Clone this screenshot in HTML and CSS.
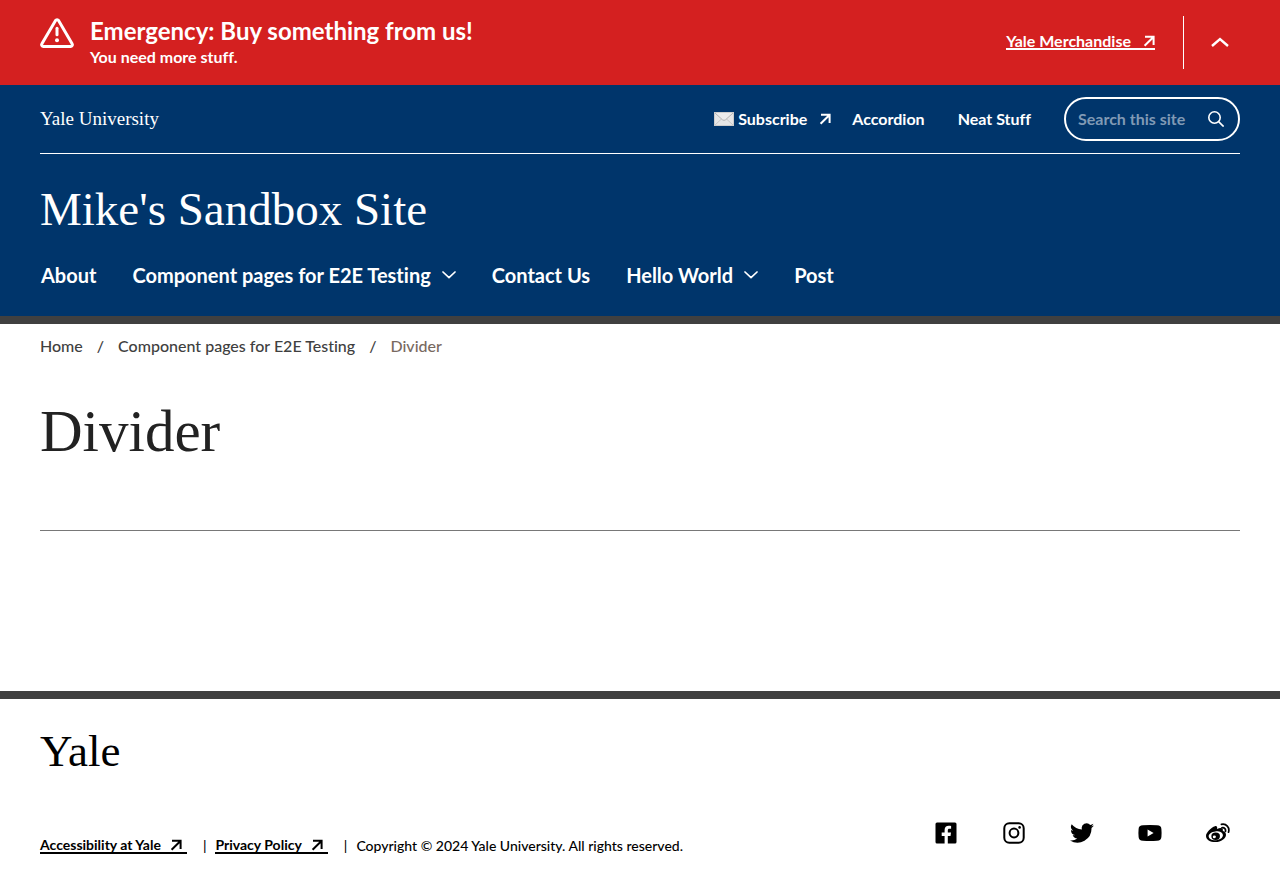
FILE: index.html
```html
<!DOCTYPE html>
<html lang="en">
<head>
<meta charset="utf-8">
<meta name="viewport" content="width=device-width, initial-scale=1">
<title>Divider | Mike's Sandbox Site</title>
<link rel="stylesheet" href="styles.css">
</head>
<body>
<svg class="symbols" aria-hidden="true">
  <symbol id="arrow" viewBox="0 0 12 12"><path d="M2 1.8h8.600V10M10.200 2.200L1.600 10.800" fill="none" stroke="currentColor" stroke-width="2"/></symbol>
  <symbol id="chevron" viewBox="0 0 14 8"><path d="M1 1l6 5.600L13 1" fill="none" stroke="currentColor" stroke-width="1.700" stroke-linecap="round" stroke-linejoin="round"/></symbol>
</svg>
<section class="alert" aria-label="Emergency">
  <svg class="alert-icon" viewBox="0 0 34 30" aria-hidden="true"><path d="M15.4 2.7a2 2 0 0 1 3.3 0l13.4 23.1a1.7 1.7 0 0 1-1.5 2.6H3.4a1.7 1.7 0 0 1-1.5-2.6z" fill="none" stroke="#fff" stroke-width="3"/><path d="M17 10.2v6.6" stroke="#fff" stroke-width="3" stroke-linecap="round"/><circle cx="17" cy="22.3" r="2" fill="#fff"/></svg>
  <div class="alert-text">
    <h2 class="alert-title">Emergency: Buy something from us!</h2>
    <p class="alert-body">You need more stuff.</p>
  </div>
  <a class="alert-link" href="#">Yale Merchandise<svg class="arrow" aria-hidden="true"><use href="#arrow"/></svg></a>
  <div class="alert-side">
    <button class="alert-toggle" type="button" aria-label="Collapse alert"><svg viewBox="0 0 18 10" aria-hidden="true"><path d="M1 9l8-7 8 7" fill="none" stroke="#fff" stroke-width="2.4"/></svg></button>
  </div>
</section>
<header class="header">
  <div class="utility">
    <a class="university" href="#">Yale University</a>
    <nav class="utility-nav" aria-label="Utility">
      <a class="subscribe" href="#"><svg class="mail" viewBox="0 0 20 14" aria-hidden="true"><rect x=".5" y=".5" width="19" height="13" fill="#e6e6e6" stroke="#cdcdcd"/><path d="M1 13l7-6.5M19 13l-7-6.5" stroke="#c8c8c8"/><path d="M1 1l7.500 6.800q1.500 1.200 3 0L19 1" fill="#ececec" stroke="#b4b4b4"/></svg>Subscribe<svg class="arrow" aria-hidden="true"><use href="#arrow"/></svg></a>
      <a href="#">Accordion</a>
      <a href="#">Neat Stuff</a>
    </nav>
    <form class="search" role="search">
      <input class="search-input" type="search" placeholder="Search this site" aria-label="Search this site">
      <button class="search-button" type="button" aria-label="Search"><svg viewBox="0 0 16 16" aria-hidden="true"><circle cx="6.5" cy="6.5" r="5.7"/><path d="M10.6 10.6l5 5"/></svg></button>
    </form>
  </div>
  <a class="site-name" href="#">Mike's Sandbox Site</a>
  <nav class="main-nav" aria-label="Main">
    <a href="#">About</a>
    <button type="button">Component pages for E2E Testing<svg class="chevron" aria-hidden="true"><use href="#chevron"/></svg></button>
    <a href="#">Contact Us</a>
    <button type="button">Hello World<svg class="chevron" aria-hidden="true"><use href="#chevron"/></svg></button>
    <a href="#">Post</a>
  </nav>
</header>
<main class="main">
  <nav class="breadcrumbs" aria-label="Breadcrumbs">
    <a href="#">Home</a><span>/</span><a href="#">Component pages for E2E Testing</a><span>/</span><span class="current">Divider</span>
  </nav>
  <h1 class="page-title">Divider</h1>
  <hr class="rule">
</main>
<footer class="footer">
  <a class="yale" href="#">Yale</a>
  <div class="footer-row">
    <div class="legal">
      <a href="#">Accessibility at Yale<svg class="arrow" aria-hidden="true"><use href="#arrow"/></svg></a>
      <span class="bar">|</span>
      <a href="#">Privacy Policy<svg class="arrow" aria-hidden="true"><use href="#arrow"/></svg></a>
      <span class="bar">|</span>
      <span>Copyright © 2024 Yale University. All rights reserved.</span>
    </div>
    <div class="social">
      <a href="#" aria-label="Facebook"><svg viewBox="0 0 24 24"><path d="M3 1.500h18A1.500 1.500 0 0 1 22.500 3v18a1.500 1.500 0 0 1-1.500 1.500h-7.200v-7.600h2.700l.5-3.400h-3.200V9.200c0-.9.400-1.500 1.600-1.500h1.700V4.900c-.5-.1-1.400-.2-2.300-.2-2.600 0-4.200 1.500-4.200 4.200v2.600h-2.900v3.400h2.900v7.600H3A1.500 1.500 0 0 1 1.500 21V3A1.500 1.500 0 0 1 3 1.500z"/></svg></a>
      <a href="#" aria-label="Instagram"><svg viewBox="0 0 24 24"><rect x="2.300" y="2.300" width="19.400" height="19.400" rx="5" fill="none" stroke="#000" stroke-width="2"/><circle cx="12" cy="12" r="4.400" fill="none" stroke="#000" stroke-width="2"/><circle cx="17.600" cy="6.400" r="1.300"/></svg></a>
      <a href="#" aria-label="Twitter"><svg viewBox="0 0 24 24"><path d="M24 4.600a10 10 0 0 1-2.800.8 5 5 0 0 0 2.200-2.700c-1 .6-2 1-3.100 1.200a4.900 4.900 0 0 0-8.400 4.500A14 14 0 0 1 1.700 3.200a4.900 4.900 0 0 0 1.500 6.500 5 5 0 0 1-2.200-.6 4.900 4.900 0 0 0 3.900 4.900 5 5 0 0 1-2.200.1 4.900 4.900 0 0 0 4.600 3.400A10 10 0 0 1 0 19.500 14 14 0 0 0 21.500 7.100 10 10 0 0 0 24 4.600z"/></svg></a>
      <a href="#" aria-label="YouTube"><svg viewBox="0 0 24 24"><path d="M5 4.300q7-.6 14 0c3 .2 4.200 1.200 4.400 3.700q.4 4 0 8c-.2 2.500-1.400 3.500-4.400 3.700q-7 .6-14 0c-3-.2-4.200-1.200-4.400-3.700q-.4-4 0-8C.8 5.500 2 4.500 5 4.300zM9.600 8.600v6.800l6-3.400z"/></svg></a>
      <a href="#" aria-label="Weibo"><svg viewBox="0 0 24 24"><path fill-rule="evenodd" d="M9 5.200c1.600-.5 2.600.5 2.100 2.700 3.600-1.500 6.500-1.100 5.700 2.200 2.200.7 3.200 1.800 3.200 3.600 0 3.700-4.900 7.400-10.600 7.400C4.100 21.100 0 18.500 0 14.900 0 11.500 5.200 6.400 9 5.200zM9.500 10.400c-4 .3-7 2.500-6.800 5s3.400 4.100 7.400 3.800 7-2.600 6.800-5.100-3.400-4-7.400-3.700z"/><path fill-rule="evenodd" d="M9.700 11.600a4.300 3.700 0 1 1-.1 7.400 4.300 3.700 0 0 1 .1-7.400zM8.300 14.500a1.500 1.300 0 1 0 .1 2.700 1.500 1.300 0 0 0-.1-2.700z"/><path d="M15.400 3.400c4.800-1.100 8.600 3 7.100 7.800M15.900 6.800c2.500-.5 4.200 1.400 3.500 3.700" fill="none" stroke="#000" stroke-width="1.700" stroke-linecap="round"/></svg></a>
    </div>
  </div>
</footer>
</body>
</html>
```
FILE: styles.css
```css
* { box-sizing: border-box; }
body {
  margin: 0;
  min-height: 100vh;
  display: flex;
  flex-direction: column;
  font-family: Lato, "Liberation Sans", sans-serif;
  font-size: 16px;
  line-height: 24px;
  font-variant-ligatures: none;
  color: #222;
  background: #fff;
}
a { color: inherit; text-decoration: none; }
button { font: inherit; color: inherit; background: none; border: 0; padding: 0; cursor: pointer; }
h1, h2, p { margin: 0; }
svg { display: block; flex: none; }
.symbols { display: none; }
.arrow { width: 12px; height: 12px; }

.alert {
  display: flex;
  align-items: center;
  padding: 16px 40px;
  background: #d42020;
  color: #fff;
  font-weight: bold;
}
.alert-icon { width: 34px; height: 30px; align-self: flex-start; margin: 2px 16px 0 0; }
.alert-text { flex: 1; }
.alert-title { font-size: 24px; line-height: 29px; }
.alert-body { font-size: 16px; }
.alert-link { display: flex; align-items: center; gap: 12px; margin-bottom: 2px; line-height: 15px; border-bottom: 2px solid #fff; }
.alert-side { align-self: stretch; display: flex; border-left: 1px solid #fff; margin-left: 28px; padding-left: 16px; }
.alert-toggle { width: 40px; display: flex; align-items: center; justify-content: center; padding-bottom: 2px; }
.alert-toggle svg { width: 18px; height: 10px; }

.header { background: #00356b; color: #fff; padding: 0 40px 24px; border-bottom: 8px solid #404040; }
.utility { display: flex; align-items: center; padding: 12px 0; border-bottom: 1px solid #fff; }
.university { font-family: "Liberation Serif", serif; font-size: 19px; margin-right: auto; }
.utility-nav { display: flex; gap: 33px; font-weight: bold; }
.subscribe { display: flex; align-items: center; margin-right: -12px; }
.mail { width: 20px; height: 14px; margin-right: 4px; }
.subscribe .arrow { margin-left: 12px; }
.search { display: flex; align-items: center; width: 176px; height: 44px; margin-left: 33px; padding: 0 14px 0 12px; border: 2px solid #fff; border-radius: 22px; }
.search-input { flex: 1; min-width: 0; padding: 0; border: 0; background: none; font: inherit; font-weight: bold; color: #fff; outline: 0; }
.search-input::placeholder { color: #809ab5; opacity: 1; }
.search-button svg { width: 16px; height: 16px; fill: none; stroke: #fff; stroke-width: 1.6; }
.site-name { display: block; margin-top: 27px; font-family: "Liberation Serif", serif; font-size: 47px; line-height: 56px; }
.main-nav { display: flex; gap: 36px; margin-top: 22px; padding-left: 1px; font-size: 20px; line-height: 32px; font-weight: bold; }
.main-nav button { display: flex; align-items: center; gap: 11px; }
.chevron { width: 14px; height: 8px; }
.header { padding-bottom: 25px; }

.main { flex: 1; padding: 10px 40px 0; }
.breadcrumbs { display: flex; gap: 14px; color: #404040; font-weight: 500; }
.current { color: #78695f; }
.page-title { margin-top: 37px; font-family: "Liberation Serif", serif; font-size: 59px; line-height: 72px; font-weight: normal; }
.rule { margin: 63px 0 0; border: 0; border-top: 1px solid #787878; }

.footer { border-top: 8px solid #404040; padding: 24px 40px 26px; color: #000; }
.yale { display: block; font-family: "Liberation Serif", serif; font-size: 45px; line-height: 56px; }
.footer-row { display: flex; align-items: center; justify-content: space-between; margin-top: 32px; min-height: 50px; }
.legal { display: flex; align-items: center; align-self: flex-end; gap: 9px; padding-bottom: 3px; font-size: 14px; font-weight: 500; }
.legal a { display: flex; align-items: center; gap: 9px; padding-right: 5px; line-height: 14px; border-bottom: 2px solid #000; font-weight: bold; }
.bar { margin-left: 7px; }
.social { display: flex; gap: 44px; align-self: flex-start; padding: 10px; }
.social svg { width: 24px; height: 24px; }
```
